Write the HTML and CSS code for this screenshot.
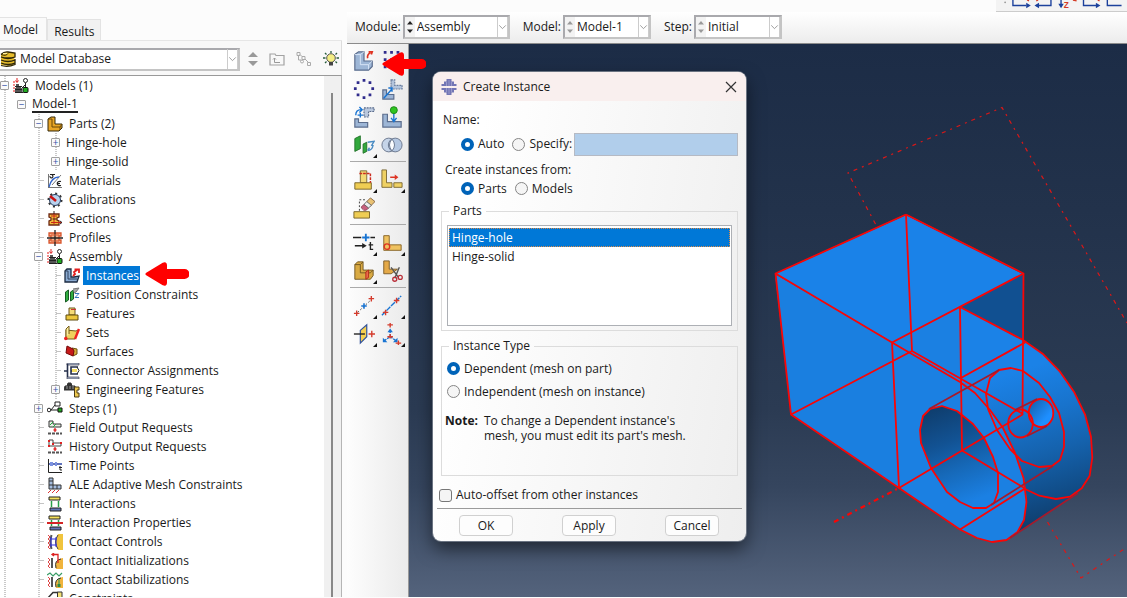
FILE: index.html
```
<!DOCTYPE html>
<html lang="en">
<head>
<meta charset="utf-8">
<title>Create Instance</title>
<link rel="stylesheet" href="styles.css">
</head>
<body>
<svg class="defs" aria-hidden="true">
  <symbol id="assembly" viewBox="0 0 16 16"><path d="M4 0v4M2.500 2.500L4 4.500l1.500-2" stroke="#d22" fill="none"/><path d="M1 3v12" stroke="#e66" stroke-width="1.500" stroke-dasharray="2 1"/><path d="M3 6h3v2h2v2h1v5H2v-5h1z" fill="#555"/><path d="M2 8.500h7M2 11.500h7M2 14.500h8" stroke="#222"/><circle cx="12.500" cy="2.500" r="2" fill="#fff" stroke="#222"/><path d="M12.500 5v5M9 10l3-3" stroke="#222" fill="none"/><rect x="10" y="9.500" width="5" height="5" rx="1" fill="#2a2" stroke="#111"/></symbol>
  <symbol id="chev" viewBox="0 0 11 20"><path d="M1.500 8l4 4 4-4" fill="none" stroke="#888"/></symbol>
  <symbol id="spin" viewBox="0 0 10 20"><path d="M2 7.500L5 4l3 3.500zM2 12.500L5 16l3-3.500z" fill="currentColor"/></symbol>
  <symbol id="pointer" viewBox="0 0 44 26"><path d="M2 13L18.500 3q2-1 2 1v5.500h19a3.500 3.500 0 010 7h-19V22q0 2-2 1z" fill="#f00" stroke="#f00" stroke-width="3" stroke-linejoin="round"/></symbol>
  <symbol id="corner" viewBox="0 0 4 4"><path d="M4 0v4H0z" fill="#111"/></symbol>
</svg>
<div class="app">
  <aside class="side">
    <div class="tabs" role="tablist">
      <button class="tab active" role="tab" aria-selected="true">Model</button>
      <button class="tab" role="tab" aria-selected="false">Results</button>
    </div>
    <div class="dbbar">
      <div class="combo database">
        <svg class="i16" viewBox="0 0 16 16"><path d="M1 3l5-2 9 1v4l-1 1 1 2v4l-5 2-9-1z" fill="#e7bd2d"/><path d="M1 3.500q3-3 7-2.500l7 1v4q-7 2-14 0M1 6q7 3 14 0M1 9q7 3 14 0M1 12q7 3 14 0M1 14.500q7 2 14-1M15 8v6" fill="none" stroke="#2e2608" stroke-width="1.300"/><path d="M1 3.500q5 2 7-1" fill="none" stroke="#2e2608"/><path d="M3 2.500h4" stroke="#fff2a0"/></svg>
        <select aria-label="Database"><option>Model Database</option></select>
        <svg class="chev"><use href="#chev"/></svg>
      </div>
      <svg class="updown" viewBox="0 0 10 16"><path d="M0 6l5-5 5 5zM0 10h10l-5 5z" fill="#999"/></svg>
      <button class="mini" aria-label="Up one level"><svg class="i16" viewBox="0 0 16 16"><path d="M1 3h5l1 1.500h8V14H1z" fill="none" stroke="#a2a2a2" stroke-width="1.200"/><path d="M5.500 9V7M4 8.500L5.500 7 7 8.500M5.500 8v3.500H11" fill="none" stroke="#999"/></svg></button>
      <button class="mini" aria-label="Show tree"><svg class="i16" viewBox="0 0 16 16"><g fill="none" stroke="#aaa"><path d="M1 1.500h3v3H1zM6 5.500h3v3H6zM11.500 11.500h3v3h-3zM2.500 5v4H5M4 3.500l2 2M9 8l3 3"/><circle cx="6" cy="10.500" r="1.500"/></g></svg></button>
      <button class="mini" aria-label="Tips"><svg class="i16" viewBox="0 0 16 16"><path d="M8 0v2M2 2l1.500 1.500M14 2l-1.500 1.500M0 7h2.500M13.500 7H16M2 12l1.500-1.500M14 12l-1.500-1.500" stroke="#285c3c" stroke-width="1.300"/><circle cx="8" cy="7" r="4.300" fill="#f4ee83" stroke="#555"/><path d="M6 11h4v3.500H6z" fill="#444"/></svg></button>
    </div>
    <div class="treebox">
      <ul class="tree rail">
        <li><div class="row"><button class="exp" aria-label="Collapse">−</button><svg class="i16"><use href="#assembly"/></svg><span>Models (1)</span></div>
        <ul>
          <li><div class="row bare"><button class="exp" aria-label="Collapse">−</button><span class="current">Model-1</span></div>
          <ul class="rail">
            <li><div class="row"><button class="exp" aria-label="Collapse">−</button><svg class="i16" viewBox="0 0 16 16"><path d="M1 3l3-2h4v7h7v4l-3 3H1z" fill="#e8a526" stroke="#33280c"/><path d="M1 3h4v8h8l2-3M13 11v3" fill="none" stroke="#6b4908"/></svg><span>Parts (2)</span></div>
              <ul class="rail">
                <li><div class="row bare"><button class="exp" aria-label="Expand">+</button><span>Hinge-hole</span></div></li>
                <li><div class="row bare"><button class="exp" aria-label="Expand">+</button><span>Hinge-solid</span></div></li>
              </ul></li>
            <li><div class="row"><i class="tick"></i><svg class="i16" viewBox="0 0 16 16"><path d="M1.500 15V1M1 14.500h14M5 12l9-10" fill="none" stroke="#777"/><path d="M2 14C4 6 8 4 12 4" fill="none" stroke="#36c" stroke-width="1.300"/><path d="M3 1.500h5M5 2a1.500 1.500 0 11-2 1M14 8.500c-5-1-5 5 0 4M10 10.500h3" fill="none" stroke="#222" stroke-width="1.200"/></svg><span>Materials</span></div></li>
            <li><div class="row"><i class="tick"></i><svg class="i16" viewBox="0 0 16 16"><circle cx="8" cy="8" r="6.500" fill="none" stroke="#333" stroke-width="2" stroke-dasharray="2 3"/><circle cx="8" cy="8" r="5.500" fill="#b8d2ee" stroke="#263b5e"/><path d="M3 4l6 5" stroke="#c11" stroke-width="2.500"/></svg><span>Calibrations</span></div></li>
            <li><div class="row"><i class="tick"></i><svg class="i16" viewBox="0 0 16 16"><path d="M2 3h10v3l-2 1v2l2 1v4H2v-4l2-1V7L2 6z" fill="#f0bc3d" stroke="#6d2814" stroke-width="1.300"/><path d="M7 2v11M4 11.500h11M4 5h6" stroke="#cb2716"/><path d="M7 0v3M5.500 8h4M13 10l2 1.500-2 1.500" fill="none" stroke="#322"/></svg><span>Sections</span></div></li>
            <li><div class="row"><i class="tick"></i><svg class="i16" viewBox="0 0 16 16"><path d="M2 3h12v3h-2v4h2v3H2v-3h2V6H2z" fill="#f2b38e" stroke="#d8542c" stroke-width="1.300"/><path d="M8 0v16M0 8h16" stroke="#222" stroke-width="1.300"/><path d="M4 5h8M4 11h8" stroke="#d8542c"/></svg><span>Profiles</span></div></li>
            <li><div class="row"><button class="exp" aria-label="Collapse">−</button><svg class="i16"><use href="#assembly"/></svg><span>Assembly</span></div>
              <ul class="rail">
                <li><div class="row"><i class="tick"></i><svg class="i16" viewBox="0 0 16 16"><path d="M1 3l2-2h4v8h3l5-1-2 6H1z" fill="#8babd2" stroke="#1c2b42" stroke-width="1.300"/><path d="M1 3h3v8h9" fill="none" stroke="#31435f"/><path d="M9 8l2-2-1-2 3-2M10.500 1.500H15V5" fill="none" stroke="#e21d1d" stroke-width="1.800"/></svg><span class="selected">Instances</span><svg class="mark tree-mark"><use href="#pointer"/></svg></div></li>
                <li><div class="row"><i class="tick"></i><svg class="i16" viewBox="0 0 16 16"><path d="M1.500 5l3-2v10l-3 2zM6.500 5l3-2v9l-3 2z" fill="#31ae40" stroke="#185b25"/><path d="M9 2l6-1-3 4-2 1" fill="#aaa" stroke="#777"/><path d="M11 6.500h4l-4 4h4" fill="none" stroke="#37b"/></svg><span>Position Constraints</span></div></li>
                <li><div class="row"><i class="tick"></i><svg class="i16" viewBox="0 0 16 16"><path d="M5 2h6v7H5z" fill="#f4da78" stroke="#6b571e"/><path d="M2 9h12v5H2z" fill="#ebc63e" stroke="#5e4a0d"/><path d="M7 3.500h5" stroke="#c33" fill="none"/></svg><span>Features</span></div></li>
                <li><div class="row"><i class="tick"></i><svg class="i16" viewBox="0 0 16 16"><path d="M2 5l10 1 2-1-3 9H2z" fill="#efd05d" stroke="#765c18"/><path d="M2 12V4l3-3v8" fill="#faed9b" stroke="#765c18"/><path d="M11 14l4-10" stroke="#e22" stroke-width="2.400"/><circle cx="1.800" cy="13.500" r="1.800" fill="#e22"/></svg><span>Sets</span></div></li>
                <li><div class="row"><i class="tick"></i><svg class="i16" viewBox="0 0 16 16"><path d="M8 4l5 1v5l-4 2z" fill="#d4aa38" stroke="#6f5315"/><path d="M3 2l6 3 1 2-1 5-7-3z" fill="#c71919" stroke="#730909"/></svg><span>Surfaces</span></div></li>
                <li><div class="row"><i class="tick"></i><svg class="i16" viewBox="0 0 16 16"><path d="M3 0h12v2H3zM3 14h12v2H3z" fill="#a8b4cb" stroke="#445" stroke-width=".7"/><path d="M3.500 1v13M0 8h4M14 4H7v7h7M7 8h3" fill="none" stroke="#26304c" stroke-width="1.600"/><path d="M8 6h5v3H8z" fill="#f4dc60"/><path d="M13 4l2 3.500-2 3.500" fill="none" stroke="#222"/></svg><span>Connector Assignments</span></div></li>
                <li><div class="row"><button class="exp" aria-label="Expand">+</button><svg class="i16" viewBox="0 0 16 16"><path d="M0 8l1-4h10v4zM4 1h3l1 3H3z" fill="#333" stroke="#333"/><path d="M3 4v3M6 4v3M9 4v3" stroke="#999"/><path d="M10.500 5H15v3h-2v3h2v4h-4.500z" fill="#edc850" stroke="#4b3b13"/></svg><span>Engineering Features</span></div></li>
              </ul></li>
            <li><div class="row"><button class="exp" aria-label="Expand">+</button><svg class="i16" viewBox="0 0 16 16"><circle cx="2" cy="9" r="1.800" fill="#fff" stroke="#222"/><path d="M4 9h7M4 9l4-5" stroke="#222" fill="none"/><path d="M8 1h5v4H8z" fill="#fff" stroke="#222"/><path d="M11 7h4v4h-4z" fill="#2a2" stroke="#111"/></svg><span>Steps (1)</span></div></li>
            <li><div class="row"><i class="tick"></i><svg class="i16" viewBox="0 0 16 16"><path d="M2 1h4v3h8v3H2z" fill="#e8efe6" stroke="#333"/><path d="M3 5l3-3M6 7l3-3" stroke="#2a4"/><path d="M8 8v4M6.500 10h3" stroke="#d22" stroke-width="1.300"/><path d="M1 13.500h14" stroke="#555" stroke-width="2" stroke-dasharray="3 1"/></svg><span>Field Output Requests</span></div></li>
            <li><div class="row"><i class="tick"></i><svg class="i16" viewBox="0 0 16 16"><path d="M2 1h4v3h8v3H2z" fill="#fff" stroke="#444"/><path d="M1 1h2v2H1zM5 4h2v2H5zM13 3h2v2h-2zM1 6h2v2H1z" fill="#d22"/><path d="M8 8v4M6.500 10h3" stroke="#d22" stroke-width="1.300"/><path d="M1 13.500h14" stroke="#555" stroke-width="2" stroke-dasharray="3 1"/></svg><span>History Output Requests</span></div></li>
            <li><div class="row"><i class="tick"></i><svg class="i16" viewBox="0 0 16 16"><path d="M1.500 1v13.500H15" fill="none" stroke="#222"/><path d="M2 6h13" stroke="#2b43a5" stroke-width="1.500"/><path d="M3 4h3v4H3zM8 4h2v4H8z" fill="#7b91df"/><path d="M13 8v4h2M12 9.500h3" fill="none" stroke="#222"/></svg><span>Time Points</span></div></li>
            <li><div class="row"><i class="tick"></i><svg class="i16" viewBox="0 0 16 16"><path d="M2 1h4v7h8v4H2z" fill="#a6bee0" stroke="#333"/><path d="M2 4h4M2 8h4v4M10 8v4" stroke="#333" fill="none"/><path d="M1 16l3-3M5 16l3-3M9 16l3-3" stroke="#d33"/></svg><span>ALE Adaptive Mesh Constraints</span></div></li>
            <li><div class="row"><i class="tick"></i><svg class="i16" viewBox="0 0 16 16"><path d="M2 1h11v3H2z" fill="#f6e15c" stroke="#222"/><path d="M3 12h11v3H3z" fill="#6377b6" stroke="#222"/><path d="M4.500 5v6M11.500 5v6" stroke="#28a048" stroke-width="1.500"/></svg><span>Interactions</span></div></li>
            <li><div class="row"><i class="tick"></i><svg class="i16" viewBox="0 0 16 16"><path d="M2 1h11v3H2z" fill="#f6e15c" stroke="#222"/><path d="M3 12h11v3H3z" fill="#6377b6" stroke="#222"/><path d="M4.500 5v6M11.500 5v6" stroke="#28a048" stroke-width="1.500"/><path d="M0 8h16" stroke="#d32525" stroke-width="2"/></svg><span>Interaction Properties</span></div></li>
            <li><div class="row"><i class="tick"></i><svg class="i16" viewBox="0 0 16 16"><path d="M16 0v16h-5q-5-8 0-16z" fill="#f0c43d"/><path d="M11 1q-5 7 0 14" fill="none" stroke="#444"/><path d="M4.500 1q-2 7 0 14" stroke="#555" stroke-width="2" fill="none"/><path d="M1 1l2 2-2 2 2 2-2 2 2 2-2 2 2 2" stroke="#d44" fill="none"/><path d="M3 5h7M3 11h7M4 3v10M9 3v10" stroke="#3434d8"/></svg><span>Contact Controls</span></div></li>
            <li><div class="row"><i class="tick"></i><svg class="i16" viewBox="0 0 16 16"><path d="M16 5v11H9q-3-9 7-11z" fill="#f0b43d"/><path d="M14 6q-7 1-5 9" fill="none" stroke="#333"/><path d="M5 5v10" stroke="#555" stroke-width="2"/><path d="M1 5l2 2-2 2 2 2-2 2 2 2" stroke="#d44" fill="none"/><path d="M11 10V1.500H5M7 0L5 1.500 7 3" fill="none" stroke="#d22" stroke-width="1.300"/></svg><span>Contact Initializations</span></div></li>
            <li><div class="row"><i class="tick"></i><svg class="i16" viewBox="0 0 16 16"><path d="M16 5v11H9q-3-9 7-11z" fill="#f0b43d"/><path d="M14 6q-7 1-5 9" fill="none" stroke="#333"/><path d="M5 5v10" stroke="#555" stroke-width="2"/><path d="M1 5l2 2-2 2 2 2-2 2 2 2" stroke="#d44" fill="none"/><path d="M0 3l3-2 3 3 3-3 3 3 3-3M12 7v6" fill="none" stroke="#3a9d67" stroke-width="1.200"/><path d="M10.500 12h3v3h-3z" fill="#2a8d45"/></svg><span>Contact Stabilizations</span></div></li>
            <li><div class="row"><i class="tick"></i><svg class="i16" viewBox="0 0 16 16"><path d="M0 8l6-6.500h5" fill="none" stroke="#333" stroke-width="1.500"/><path d="M10.500 1H15v14h-4.500z" fill="#f4e276" stroke="#333"/></svg><span>Constraints</span></div></li>
          </ul></li>
        </ul></li>
      </ul>
      <div class="scroll"><i></i></div>
    </div>
  </aside>

  <main class="work">
    <div class="strip">
      <svg class="views" viewBox="0 0 131 12"><circle cx="4" cy="2.500" r="1" fill="#999"/><g fill="none" stroke="#1c419c" stroke-width="1.500"><path d="M12.500 0v6H27M38 6h16V0M89.500 0v6H104M115.500 0v6H131M65 0v5"/></g><path d="M27 3l5 3-5 3zM41 3l-5 3 5 3zM103 3l5 3-5 3zM62 4h6l-3 5z" fill="#1c419c"/><path d="M28 0l2 1M40 0l-2 1M105 0l2 1M78 0l4 1" stroke="#d43b26" stroke-width="1.500"/><text x="68" y="9" class="axis">Z</text></svg>
    </div>
    <div class="context">
      <label for="module">Module:</label>
      <div class="combo wide"><svg class="spin"><use href="#spin"/></svg><select id="module"><option>Assembly</option></select><svg class="chev"><use href="#chev"/></svg></div>
      <label for="model">Model:</label>
      <div class="combo"><svg class="spin dim"><use href="#spin"/></svg><select id="model"><option>Model-1</option></select><svg class="chev"><use href="#chev"/></svg></div>
      <label for="step">Step:</label>
      <div class="combo"><svg class="spin dim"><use href="#spin"/></svg><select id="step"><option>Initial</option></select><svg class="chev"><use href="#chev"/></svg></div>
    </div>
    <div class="stage">
      <div class="toolbox">
        <div class="tools">
          <button aria-label="Create instance"><svg viewBox="0 0 24 24"><path d="M2 5l4-3h6v10h9v6l-4 4H2z" fill="#9db6d6" stroke="#5b6d8d" stroke-width="1.300"/><path d="M2 5h6v11h9l4-4M17 16v5M8 5l4-3" fill="none" stroke="#dce8f7"/><path d="M16 9q-1-4 3-6M17 2h4l-1 3" fill="none" stroke="#e03322" stroke-width="1.800"/></svg></button>
          <button aria-label="Linear pattern"><svg viewBox="0 0 24 24"><path d="M3 1h3v3H3zM10 1h3v3h-3zM17 1h3v3h-3zM3 9h3v3H3zM10 9h3v3h-3zM17 9h3v3h-3zM3 17h3v3H3zM10 17h3v3h-3z" fill="#302c8c"/></svg><svg class="mark tool-mark"><use href="#pointer"/></svg></button>
          <button aria-label="Radial pattern"><svg viewBox="0 0 24 24"><path d="M10.500 1h3v3h-3zM17 3.500h3v3h-3zM4 3.500h3v3H4zM1 10h3v3H1zM20 10h3v3h-3zM4 17h3v3H4zM10.500 20h3v3h-3zM17 17h3v3h-3z" fill="#302c8c"/></svg></button>
          <button aria-label="Translate instance"><svg viewBox="0 0 24 24"><path d="M11 2h4v6h8v4H11z" fill="#b3c4dc" stroke="#6b7e9d" stroke-width="1.300" stroke-dasharray="2 1"/><path d="M2 13h4v5h8v5H2z" fill="#9db6d6" stroke="#5b6d8d" stroke-width="1.300"/><path d="M3 22l9-10M8 11h4v4" fill="none" stroke="#1874d2" stroke-width="1.600"/></svg></button>
          <button aria-label="Rotate instance"><svg viewBox="0 0 24 24"><path d="M12 2h11v4h-6v6h-5z" fill="#bac8dd" stroke="#5b6d8d" stroke-width="1.300" stroke-dasharray="2 1"/><path d="M2 14h4v4h10v5H2z" fill="#9db6d6" stroke="#5b6d8d" stroke-width="1.300"/><path d="M3 10q0-6 6-6M7 1l3 3-3 3M5 10h6M8 7.500v5" fill="none" stroke="#1874d2" stroke-width="1.500"/></svg></button>
          <button aria-label="Translate to"><svg viewBox="0 0 24 24"><path d="M2 9h5v8h15v6H2z" fill="#9db6d6" stroke="#5b6d8d" stroke-width="1.300"/><path d="M14 7v9M11 13l3 4 3-4" fill="none" stroke="#1874d2" stroke-width="1.500"/><circle cx="14" cy="4.500" r="3.800" fill="#2fc421" stroke="#198316"/></svg></button>
          <button aria-label="Parallel face"><svg viewBox="0 0 24 24"><path d="M2 5l6-3v14l-6 3zM11 11l4-2v10l-4 2z" fill="#31a83c" stroke="#23732b"/><path d="M16 9l7-1-3 5M16 18q5 0 6-6M16 18l2-3" fill="none" stroke="#4a8cc3" stroke-width="1.500"/></svg><svg class="corner"><use href="#corner"/></svg></button>
          <button aria-label="Merge or cut"><svg viewBox="0 0 24 24"><circle cx="8.500" cy="12" r="7.500" fill="#c5d4e8" stroke="#66738a"/><circle cx="15.500" cy="12" r="7.500" fill="#b5c8e2" stroke="#66738a"/><path d="M12 5.500q5.500 6.500 0 13-5.500-6.500 0-13" fill="#fbfdff" stroke="#66738a"/></svg></button>
        </div>
        <div class="tools">
          <button aria-label="Offset assignment"><svg viewBox="0 0 24 24"><path d="M8 2h7v13H8z" fill="#f3d974" stroke="#7a6731"/><path d="M2 15h18v7H2z" fill="#efcd53" stroke="#756126"/><path d="M7 5h12v10" fill="none" stroke="#cc2c20" stroke-width="1.600" stroke-dasharray="3 1"/></svg><svg class="corner"><use href="#corner"/></svg></button>
          <button aria-label="Move feature"><svg viewBox="0 0 24 24"><path d="M1 1h5v14h6v5H1zM14 15h9v5h-9z" fill="#efd163" stroke="#7a6731"/><path d="M10 9h6" stroke="#d32" stroke-width="1.600"/><path d="M15 6l4 3-4 3z" fill="#d32"/></svg><svg class="corner"><use href="#corner"/></svg></button>
          <button aria-label="Delete feature"><svg viewBox="0 0 24 24"><path d="M1 16h17v7H1z" fill="#efcd53" stroke="#756126"/><path d="M7 15V3h8" fill="none" stroke="#333" stroke-dasharray="2 2"/><path d="M15 5l4-4 5 4-5 5z" fill="#e9c273" stroke="#856442"/><path d="M9 11l3-3 5 4-2 2q-4 2-6-3" fill="#c8607e" stroke="#8c4457"/><path d="M12 8l3-3 5 4-3 3z" fill="#eee" stroke="#666"/></svg></button>
        </div>
        <div class="tools">
          <button aria-label="Suppress feature"><svg viewBox="0 0 24 24"><path d="M0 6h9M19 6h5" stroke="#222" stroke-width="1.700"/><path d="M10 6h8M14 2v8" stroke="#1874d2" stroke-width="2"/><path d="M2 15h10" stroke="#222" stroke-width="1.700"/><path d="M10 12l5 3-5 3z" fill="#222"/><path d="M19 11v8h3M17 14h5" fill="none" stroke="#222" stroke-width="1.500"/></svg><svg class="corner"><use href="#corner"/></svg></button>
          <button aria-label="Edit profile"><svg viewBox="0 0 24 24"><path d="M3 4h6v10h13v6H3z" fill="#efc260" stroke="#856323"/><circle cx="6.500" cy="16" r="3" fill="none" stroke="#d32" stroke-width="1.500"/></svg><svg class="corner"><use href="#corner"/></svg></button>
          <button aria-label="Partition cell"><svg viewBox="0 0 24 24"><path d="M2 5l3-3h6v9h11v6l-3 4H2z" fill="#d9aa43" stroke="#715520"/><path d="M2 5h6v9h11l3-3M8 5l3-3" fill="none" stroke="#715520"/><path d="M14 13l3-2v8l-3 2z" fill="#e86b4a" stroke="#b32717"/></svg><svg class="corner"><use href="#corner"/></svg></button>
          <button aria-label="Cut geometry"><svg viewBox="0 0 24 24"><path d="M3 1h6v9h9l-7 5H3z" fill="#e4a948" stroke="#795a26"/><path d="M11 8l8 11M20 8l-5 12" stroke="#555" stroke-width="1.500"/><circle cx="15" cy="21" r="2.200" fill="none" stroke="#b92f39" stroke-width="1.400"/><circle cx="21" cy="19" r="2.200" fill="none" stroke="#b92f39" stroke-width="1.400"/></svg></button>
        </div>
        <div class="tools">
          <button aria-label="Create datum point"><svg viewBox="0 0 24 24"><path d="M5 19L20 5" stroke="#444" stroke-dasharray="2 2"/><path d="M1 20h6M4 17v6M17 4h6M20 1v6" stroke="#d43b2c" stroke-width="1.500"/><path d="M9 12h6M12 9v6" stroke="#1874d2" stroke-width="1.700"/></svg><svg class="corner"><use href="#corner"/></svg></button>
          <button aria-label="Create datum axis"><svg viewBox="0 0 24 24"><path d="M1 22L22 1" stroke="#1874d2" stroke-width="1.500" stroke-dasharray="6 1"/><path d="M2 19h6M5 16v6M14 6h6M17 3v6" stroke="#d43b2c" stroke-width="1.500"/></svg><svg class="corner"><use href="#corner"/></svg></button>
          <button aria-label="Create datum plane"><svg viewBox="0 0 24 24"><path d="M8 8l7-6v13l-7 7z" fill="#f6d050" stroke="#31529b" stroke-width="1.300"/><path d="M1 12h12" stroke="#222" stroke-width="1.500"/><path d="M17 12h7M20.500 8.500v7" stroke="#d43b2c" stroke-width="1.500"/></svg><svg class="corner"><use href="#corner"/></svg></button>
          <button aria-label="Create datum system"><svg viewBox="0 0 24 24"><path d="M10 8v7l-6 4M10 15l6 4" fill="none" stroke="#1874d2" stroke-dasharray="3 1" stroke-width="1.500"/><path d="M7 10l3-4 3 4zM2 16v5h5zM18 16v5h-5z" fill="#1874d2"/><path d="M7 2h6M10 0v5M16 22h6M19 19v5M7 15h6M10 12v5" stroke="#d43b2c" stroke-width="1.500"/></svg><svg class="corner"><use href="#corner"/></svg></button>
        </div>
      </div>
      <section class="viewport" aria-label="Viewport">
        <svg class="scene" viewBox="409 44 718 553" preserveAspectRatio="xMidYMid slice">
          <defs>
            <linearGradient id="side" gradientUnits="userSpaceOnUse" x1="1020" y1="370" x2="1060" y2="497"><stop offset="0" stop-color="#1b82e7"/><stop offset=".35" stop-color="#1873cc"/><stop offset=".65" stop-color="#1562ad"/><stop offset="1" stop-color="#104a83"/></linearGradient>
            <linearGradient id="bore" gradientUnits="userSpaceOnUse" x1="940" y1="408" x2="975" y2="500"><stop offset="0" stop-color="#0f3f70"/><stop offset=".35" stop-color="#125293"/><stop offset=".65" stop-color="#1669b9"/><stop offset="1" stop-color="#1b80e3"/></linearGradient>
            <linearGradient id="pin" x1="0" y1="0" x2="1" y2="1"><stop offset="0" stop-color="#135ba3"/><stop offset=".7" stop-color="#1e8fff"/></linearGradient>
            <linearGradient id="under" gradientUnits="userSpaceOnUse" x1="1023" y1="490" x2="1035" y2="530"><stop offset="0" stop-color="#115394"/><stop offset="1" stop-color="#0f3c69"/></linearGradient>
          </defs>
          <path d="M960 307l63-33v68z" fill="#115091"/>
          <path d="M960 307l63 33 20 14 17 18 14 20 11 22 6 23 1 21-2 18-8 12-12 9-14 2-17-3-14-7L960 382z" fill="url(#side)"/>
          <path d="M1025 489l14 7 17 3 22-6-60 39 6-12z" fill="url(#under)"/>
          <path d="M775 274L906 215l117 59-63 33v75l-68-40z" fill="#1a82e8"/>
          <path d="M775 274l117 68 7 146-108-73z" fill="#1a7fe0"/>
          <path d="M892 342l68-35v75l15 11 15 17 13 18 12 25 9 25 3 24-3 18-6 12-11 8-15 2-15-4-17-8-61-42z" fill="#1b80e2"/>
          <path d="M930 409l12-3 15 5 16 13 11 14 9 19 5 16v19l-4 11-8 5h-13l-13-6-13-10-16-24-10-25-1-13 3-14z" fill="url(#bore)"/>
          <ellipse cx="1041" cy="413" rx="12.300" ry="14" fill="url(#pin)"/>
          <g fill="none" stroke="#fa0505" stroke-width="1.800" stroke-linejoin="round">
            <path d="M906 214.500L775.500 273.500 791 414.500 899 488 892 342.500 775.500 273.500M906 214.500l117.500 59L892 342.500M906 214.500L912 351l-121 63.500M912 351l111 63M892 342.500l68 39.500M960 307l2 143.500M960 307l63 33M1023.500 273.500l-1 141L899 488M962 450.500l63 38-65 41M960 378.500l65-36"/>
            <path d="M960 382l15 11 15 17 13 18 12 25 8.500 25 3 24-2.500 18-6.500 12-11 8-14.500 2-15-4-17-8.500-61-41.500"/>
            <path d="M1023 340l20.300 14.300L1060 371.700l14.300 20.600 10.700 22 6 22.400 1.300 21-2.600 18-8 12.600-11.700 8.400-14 2.300-16.700-3.300L1025 489"/>
            <path d="M930 409l12-3 15 5 16 13 11 14 9 19 5 16v19l-4 11-8 5h-13l-13-6-13-10-16-24-10-25-1-13 3-14z"/>
            <path d="M999 370l12-2 12 3 16 12 11 14 9 16 5 19v15l-4 13-8 6-13 1-17-6-12-12-13-19-9-21-2-15 4-16z"/>
            <ellipse cx="1041" cy="413" rx="12.300" ry="14"/>
            <ellipse cx="1020.500" cy="423.500" rx="12.300" ry="14"/>
          </g>
          <path d="M929 409l70-39M991 505l62-39M1015 410l22-11M1027 436l20-10M1078 493l-68 45" fill="none" stroke="#a71a2b" stroke-width="1.800"/>
          <path d="M834 522l65-34" stroke="#fa0505" stroke-width="2.200" stroke-dasharray="5 4 2 4"/>
          <path d="M875.500 224L848 173l154-65.500 125 215.500M1047.500 522l33.500 56 46-31" fill="none" stroke="#dc1717" stroke-width="1.200" stroke-dasharray="4 5 2 5"/>
        </svg>
        <form class="dialog" role="dialog" aria-labelledby="title">
          <header class="titlebar">
            <svg class="i16" viewBox="0 0 16 16"><path d="M5.500 0h5v2.500H13V5h2.500v2H.5V5H3V2.500h2.500zM.5 9h15v2H13v2.500h-2.500V16h-5v-2.500H3V11H.5z" fill="#7376b5"/><path d="M5.500 3v4M8 1v6M10.500 3v4M5.500 9v4M8 9v6M10.500 9v4" stroke="#a9aad3" stroke-width=".7"/></svg>
            <h1 id="title">Create Instance</h1>
            <button type="button" class="close" aria-label="Close"><svg viewBox="0 0 12 12"><path d="M1 1l10 10M11 1L1 11" stroke="#333" stroke-width="1.200"/></svg></button>
          </header>
          <div class="content">
            <div class="line">Name:</div>
            <div class="options naming">
              <label><input type="radio" name="naming" checked>Auto</label>
              <label><input type="radio" name="naming">Specify:</label>
              <input class="name" type="text" aria-label="Instance name" disabled>
            </div>
            <div class="line from">Create instances from:</div>
            <div class="options">
              <label><input type="radio" name="source" checked>Parts</label>
              <label><input type="radio" name="source">Models</label>
            </div>
            <fieldset class="parts">
              <legend>Parts</legend>
              <select size="5" aria-label="Parts"><option selected>Hinge-hole</option><option>Hinge-solid</option></select>
            </fieldset>
            <fieldset class="type">
              <legend>Instance Type</legend>
              <label><input type="radio" name="type" checked>Dependent (mesh on part)</label>
              <label><input type="radio" name="type">Independent (mesh on instance)</label>
              <div class="note"><b>Note:</b><p>To change a Dependent instance's<br>mesh, you must edit its part's mesh.</p></div>
            </fieldset>
            <label class="offset"><input type="checkbox">Auto-offset from other instances</label>
          </div>
          <footer class="actions">
            <button type="button">OK</button>
            <button type="button">Apply</button>
            <button type="button">Cancel</button>
          </footer>
        </form>
      </section>
    </div>
  </main>
</div>
</body>
</html>
```
FILE: styles.css
```
* { box-sizing: border-box; }
body {
  margin: 0;
  font: 12px/18px "Open Sans", "Noto Sans", sans-serif;
  color: #1a1a1a;
  background: #fcfcfc;
}
button, select, input { font: inherit; color: inherit; }
button { padding: 0; border: 0; background: none; }
ul { list-style: none; margin: 0; padding: 0; }
svg { display: block; flex: none; }
.defs { position: absolute; width: 0; height: 0; }
.i16 { width: 16px; height: 16px; }
.app {
  display: grid;
  grid-template-columns: 342px 1fr;
  height: 100vh;
  padding-bottom: 1px;
  overflow: hidden;
}

/* Model tree */
.side { display: flex; flex-direction: column; min-height: 0; padding-top: 18px; }
.tabs { display: flex; align-items: flex-end; height: 23px; border-bottom: 1px solid #e6e6e6; }
.tab { height: 21px; padding: 3px 6px 0; background: #f1f1f1; border: 1px solid #e3e3e3; border-bottom: 0; }
.tab.active { height: 23px; padding: 2px 8px 0 3px; border-left: 0; background: #fafafa; }
.dbbar {
  display: flex;
  align-items: center;
  gap: 11px;
  height: 34px;
  padding: 2px 2px 0 0;
  background: #f8f8f8;
  border-right: 1px solid #ddd;
}
.combo { display: flex; align-items: stretch; height: 24px; background: #fff; border: 2px solid #a9a9ad; border-right-color: #c4c4c4; border-bottom-color: #c4c4c4; }
.combo select { flex: 1; min-width: 0; padding: 0 2px; border: 0; background: none; appearance: none; outline: 0; }
.chev { width: 11px; height: 20px; border: 1px solid #ccc; border-width: 0 1px; }
.spin { width: 10px; height: 20px; color: #222; background: #f3f3f3; }
.spin.dim { color: #9a9a9a; }
.database { flex: 1; align-items: center; border-left: 0; height: 23px; margin-right: 5px; }
.database select { padding-left: 4px; }
.updown { width: 10px; height: 16px; margin-left: -8px; }
.mini { display: flex; }
.treebox { display: flex; flex: 1; min-height: 0; background: #fff; border-top: 1px solid #999; border-right: 1px solid #b5b5b5; }
.tree { flex: 1; overflow: hidden; }
.rail { background: repeating-linear-gradient(#c9c9c9 0 1px, transparent 1px 2px) 4px 0 / 2px 100% no-repeat; }
.tree ul { padding-left: 17px; }
.tree ul .rail { padding-left: 0; margin-left: 17px; }
.row { display: flex; align-items: center; height: 19px; white-space: nowrap; position: relative; }
.row .i16 { margin: 0 6px 0 3px; }
.bare .exp { margin-right: 6px; }
.exp {
  width: 9px;
  height: 9px;
  margin: 0 1px 0 0;
  border: 1px solid #a0a0a0;
  border-radius: 1px;
  background: #fafafa;
  color: #3355aa;
  font-size: 10px;
  line-height: 7px;
}
.tick { width: 10px; height: 1px; background: linear-gradient(90deg, transparent 50%, #c4c4c4 50%); }
.current { line-height: 15px; border-bottom: 2px solid #222; }
.selected { margin: 0 0 0 -3px; padding: 0 1px 0 3px; line-height: 19px; background: #0078d7; color: #fff; }
.mark { position: absolute; width: 44px; height: 26px; z-index: 2; }
.tree-mark { left: 94px; top: -5px; }
.scroll { width: 17px; background: #f0f0f0; padding: 17px 0 0 7px; }
.scroll i { display: block; width: 2px; height: 100%; background: #888; }

/* Work area */
.work { display: flex; flex-direction: column; min-width: 0; padding-left: 5px; }
.strip { display: flex; justify-content: flex-end; height: 12px; }
.views { width: 131px; height: 12px; background: #f3f3f3; border-bottom: 1px solid #ccc; }
.axis { font: bold 9px "Liberation Sans", sans-serif; fill: #d43b26; }
.context {
  display: flex;
  align-items: center;
  height: 32px;
  padding: 0 8px 1px;
  background: linear-gradient(#fff, #ececec);
  border-bottom: 1px solid #8b8b8b;
}
.context .combo { width: 88px; margin: 0 13px 0 2px; }
.context .combo.wide { width: 107px; }
.stage { display: flex; flex: 1; min-height: 0; }
.toolbox { width: 62px; padding: 3px 2px 0 3px; background: linear-gradient(90deg, #fdfdfd, #ebebeb); border-right: 1px solid #999; }
.tools { display: grid; grid-template-columns: 28px 28px; padding-bottom: 2px; margin-bottom: 4px; border-bottom: 1px solid #aaa; }
.tools:last-child { border: 0; }
.tools button { position: relative; display: grid; place-items: center; height: 28px; }
.tools button > svg:first-child { width: 22px; height: 22px; }
.tools .corner { position: absolute; right: 1px; bottom: 1px; width: 4px; height: 4px; }
.tool-mark { left: 4px; top: 4px; }
.viewport { position: relative; flex: 1; min-width: 0; overflow: hidden; background: linear-gradient(#1c2c46, #22324b 30%, #2b3b53 66%, #35455e 80%, #54637c); }
.scene { width: 100%; height: 100%; }

/* Create Instance dialog */
.dialog {
  position: absolute;
  left: 24px;
  top: 28px;
  width: 313px;
  overflow: hidden;
  border-radius: 8px;
  background: linear-gradient(100deg, #fff 15%, #eee);
  box-shadow: 0 0 0 1px #6b7482, 0 8px 18px #0008;
}
.titlebar { display: flex; align-items: center; gap: 6px; height: 29px; padding: 0 9px 0 8px; background: #f9efee; }
.titlebar h1 { flex: 1; margin: 0; font-size: 12px; font-weight: 400; }
.close svg { width: 12px; height: 12px; }
.content { padding: 10px 8px 4px; }
.line { padding-left: 2px; }
.from { padding-left: 4px; }
.options { display: flex; align-items: center; gap: 8px; height: 19px; padding-left: 20px; }
.naming { height: 24px; margin: 3px 0 5px; }
.options label, .type label, .offset { display: flex; align-items: center; gap: 4px; }
input[type=radio] {
  appearance: none;
  width: 13px;
  height: 13px;
  margin: 0;
  border: 1px solid #858585;
  border-radius: 50%;
  background: #f5f5f5;
}
input[type=radio]:checked { border: 4px solid #0063b8; background: #fff; }
input[type=checkbox] { appearance: none; width: 13px; height: 13px; margin: 0; border: 1px solid #777; border-radius: 3px; background: #f5f5f5; }
.name { flex: 1; min-width: 0; height: 23px; margin-left: -6px; border: 1px solid #b5bac4; background: #b1ceeb; }
fieldset { min-width: 0; margin: 0; border: 1px solid #dcdcdc; }
legend { padding: 0 4px; }
.parts { margin-top: 4px; padding: 5px 5px 4px; }
.parts legend, .type legend { margin-left: 2px; }
.parts select { display: block; width: 100%; height: 101px; padding: 2px 1px; border: 1px solid #adb0b5; background: #fff; outline: 0; overflow: hidden; border-radius: 0; }
.parts option { min-height: 19px; padding: 0 2px; border: 1px solid transparent; line-height: 17px; color: #1a1a1a; }
.parts option:checked { background: linear-gradient(#0078d7, #0078d7) border-box; color: #fff; border: 1px dotted #d98b4a; }
.type { margin-top: 6px; padding: 2px 5px 32px; }
.type label { height: 23px; }
.note { display: flex; gap: 6px; margin: 10px 0 0 -2px; line-height: 15px; }
.note p { margin: 0; }
.offset { height: 18px; margin: 10px 0 0 -2px; }
.actions { display: flex; justify-content: space-between; margin: 0 4px; padding: 6px 23px 5px 22px; border-top: 1px solid #9b9b9b; }
.actions button { width: 54px; height: 21px; line-height: 18px; border: 1px solid #d0d0d0; border-radius: 4px; background: #fdfdfd; }
```
